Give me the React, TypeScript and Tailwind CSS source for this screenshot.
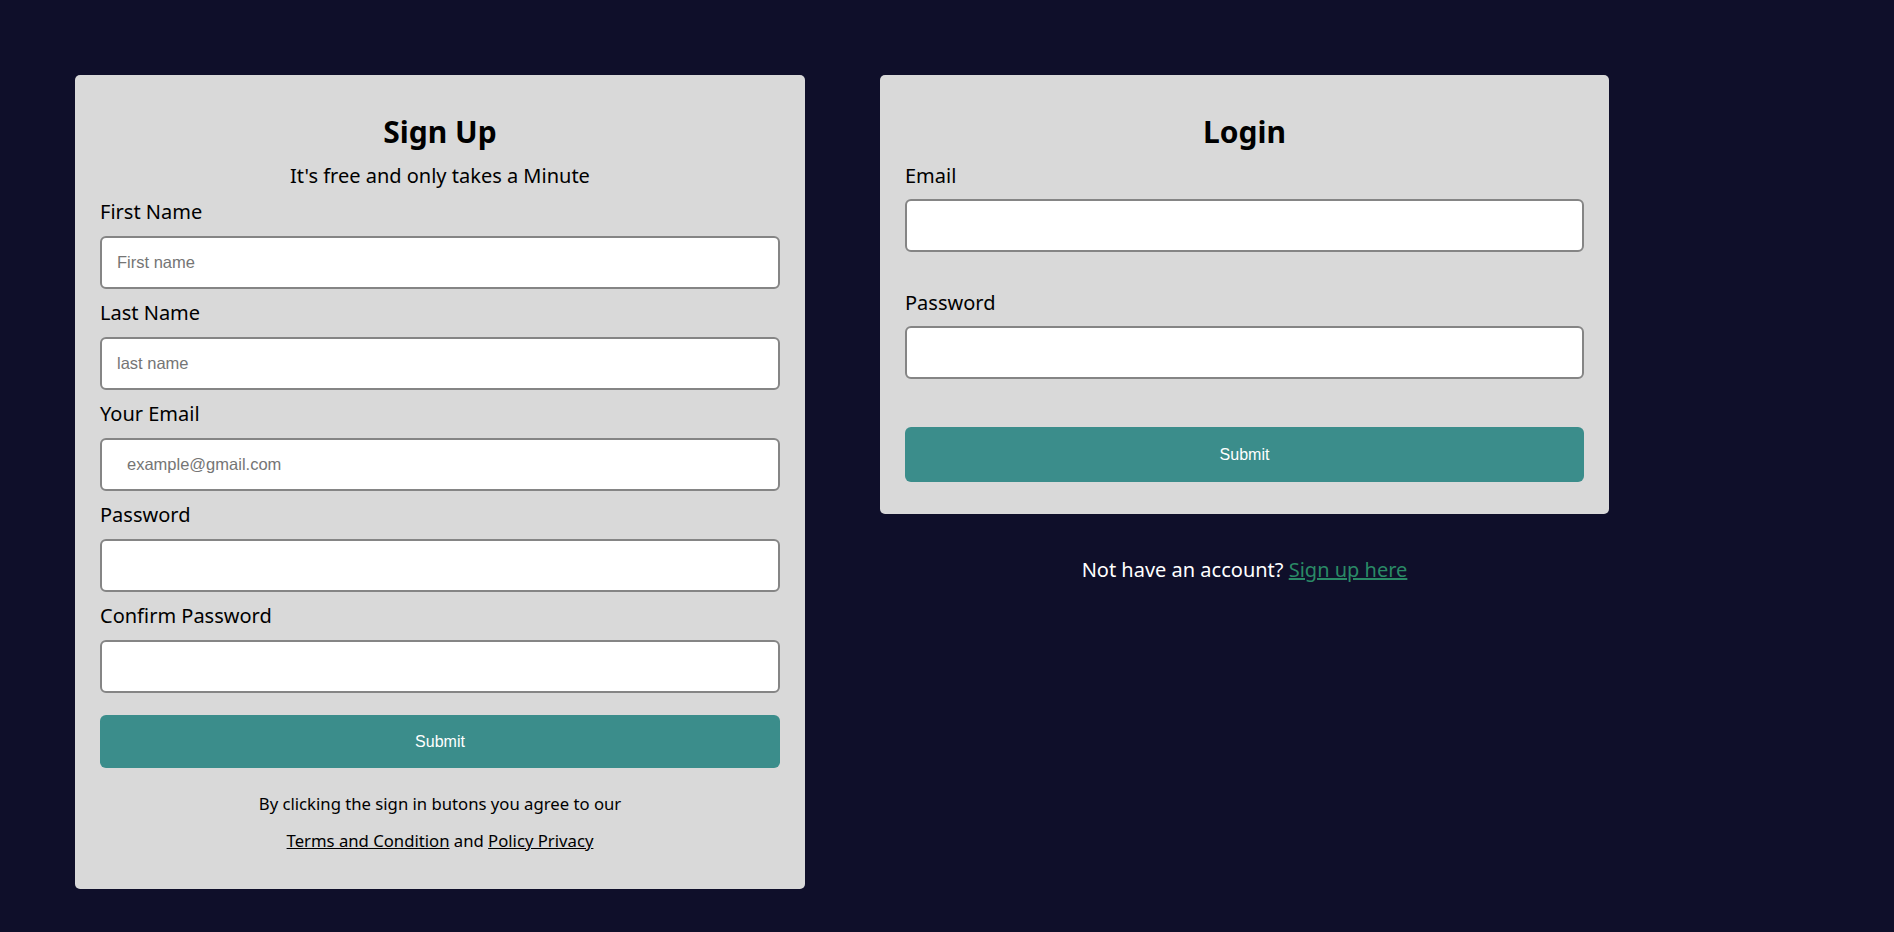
function Field({
  label,
  type = "text",
  placeholder,
  pad = "pl-[15px]",
}: {
  label: string;
  type?: string;
  placeholder?: string;
  pad?: string;
}) {
  return (
    <div className="flex flex-col">
      <label className="text-[20px] leading-[27px] text-black">{label}</label>
      <input
        type={type}
        placeholder={placeholder}
        className={`mt-[11px] mb-[10px] h-[53px] w-full rounded-[6px] border-2 border-[#858585] bg-white ${pad} font-['Liberation_Sans',Arial,sans-serif] text-[16.5px] text-black outline-none placeholder:text-[#757575]`}
      />
    </div>
  );
}

function SubmitButton({ h = "h-[53px]" }: { h?: string }) {
  return (
    <button className={`${h} w-full rounded-[6px] bg-[#3b8d8b] font-['Liberation_Sans',Arial,sans-serif] text-[16px] text-white`}>
      Submit
    </button>
  );
}

export default function App() {
  return (
    <div className="min-h-[932px] bg-[#0f0f2a] font-['Noto_Sans',sans-serif] pl-[75px] pt-[75px]">
      <div className="flex items-start gap-[75px]">
        {/* sign up */}
        <div className="flex flex-col">
          <div className="w-[730px] rounded-[5px] bg-[#d9d9d9] px-[25px] pt-[35px] pb-[37px]">
            <h1 className="text-center text-[30px] font-bold leading-[44px] text-black">Sign Up</h1>
            <p className="mt-[8px] mb-[9px] text-center text-[20px] leading-[27px] text-black">
              It's free and only takes a Minute
            </p>
            <Field label="First Name" placeholder="First name" />
            <Field label="Last Name" placeholder="last name" />
            <Field label="Your Email" type="email" placeholder="example@gmail.com" pad="pl-[25px]" />
            <Field label="Password" type="password" />
            <Field label="Confirm Password" type="password" />
            <div className="mt-[12px]">
              <SubmitButton />
            </div>
            <p className="mt-[25px] text-center text-[16.7px] leading-[22px] text-black">
              By clicking the sign in butons you agree to our
            </p>
            <p className="mt-[15px] text-center text-[16.7px] leading-[22px] text-black">
              <a className="underline">Terms and Condition</a> and <a className="underline">Policy Privacy</a>
            </p>
          </div>
          <p className="mt-[40px] ml-[190px] text-[16px] text-[#2a2a3a]">Already have an account</p>
        </div>

        {/* login */}
        <div className="flex w-[729px] flex-col">
          <div className="rounded-[5px] bg-[#d9d9d9] px-[25px] pt-[35px] pb-[32px]">
            <h1 className="text-center text-[30px] font-bold leading-[44px] text-black">Login</h1>
            <div className="mt-[8px] flex flex-col">
              <label className="text-[20px] leading-[27px] text-black">Email</label>
              <input
                type="email"
                className="mt-[10px] h-[53px] w-full rounded-[6px] border-2 border-[#858585] bg-white px-[13px] outline-none"
              />
            </div>
            <div className="mt-[37px] flex flex-col">
              <label className="text-[20px] leading-[27px] text-black">Password</label>
              <input
                type="password"
                className="mt-[10px] h-[53px] w-full rounded-[6px] border-2 border-[#858585] bg-white px-[13px] outline-none"
              />
            </div>
            <div className="mt-[48px]">
              <SubmitButton h="h-[55px]" />
            </div>
          </div>
          <p className="mt-[42px] text-center text-[20px] leading-[27px] text-white">
            Not have an account? <a className="text-[#2a8a66] underline">Sign up here</a>
          </p>
        </div>
      </div>
    </div>
  );
}
